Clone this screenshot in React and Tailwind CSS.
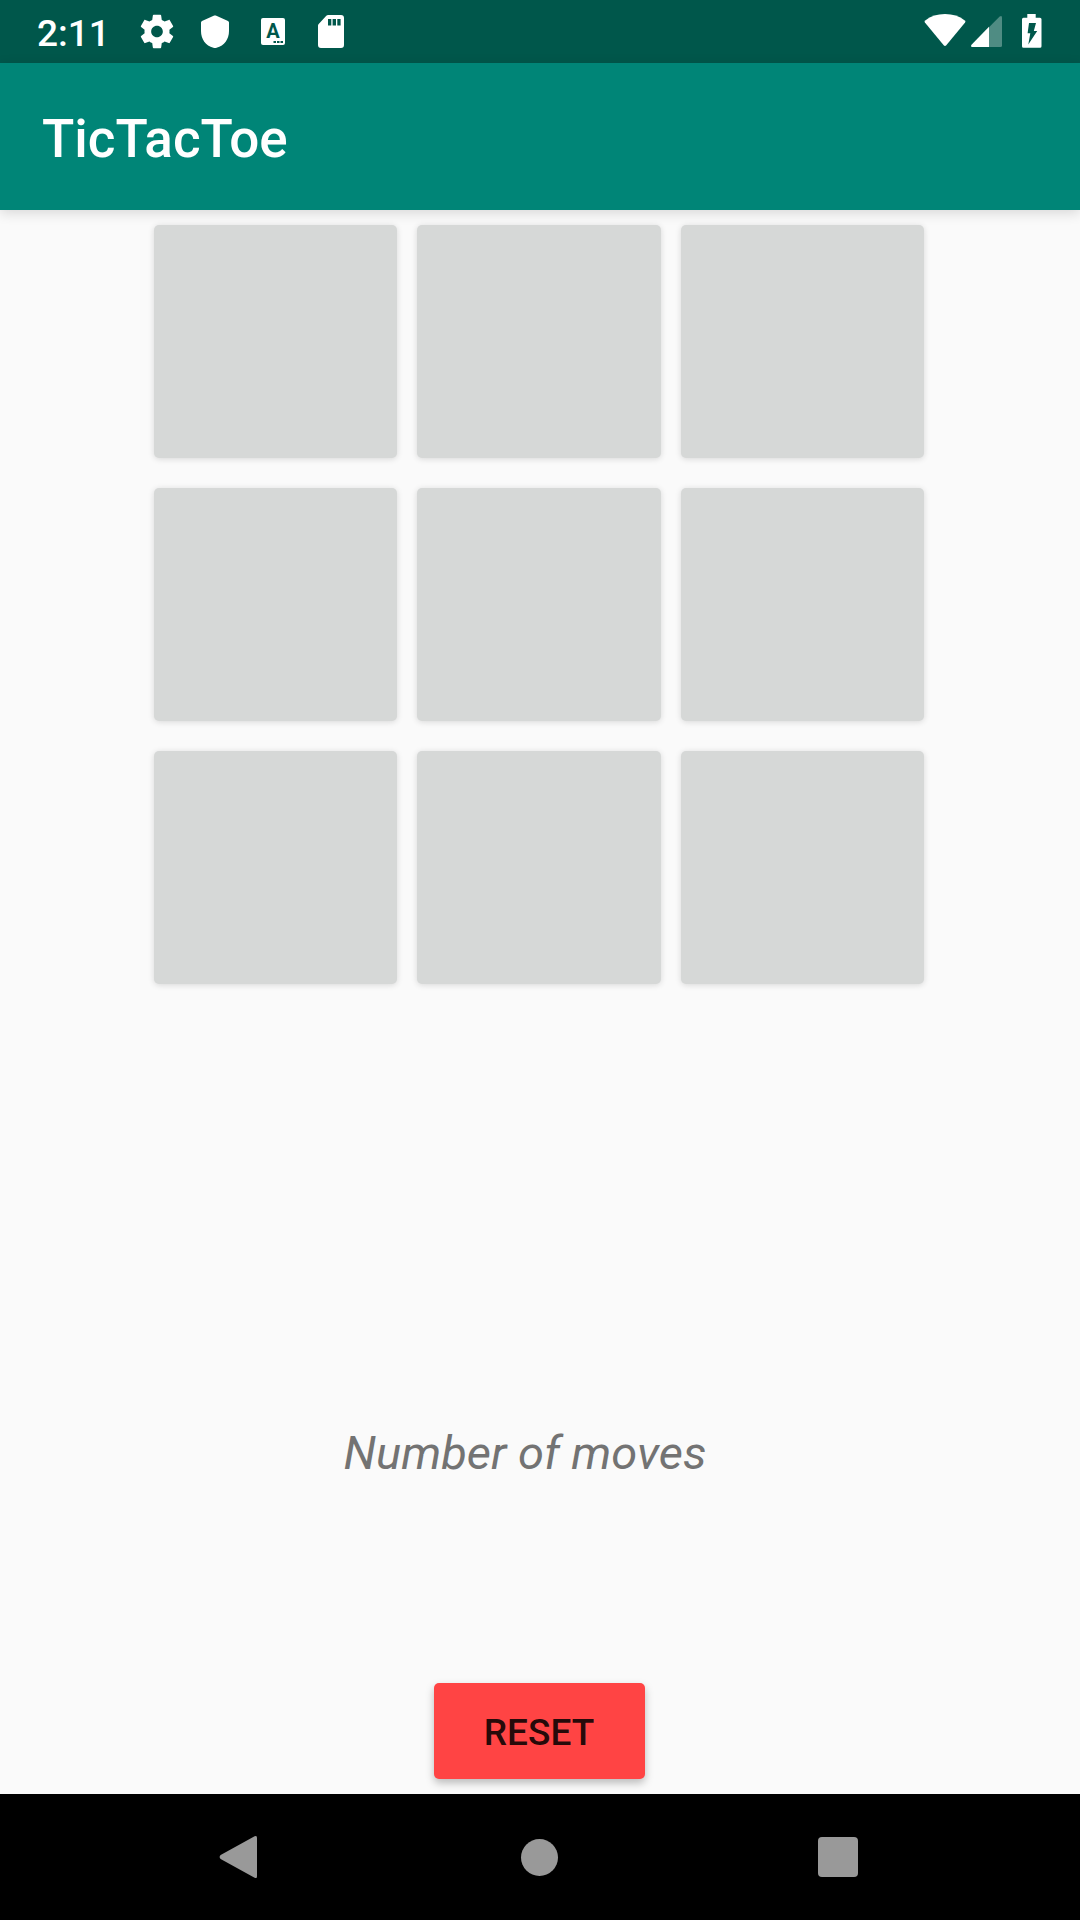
import React, { useState } from "react";

const icon = "h-[41px] w-10 shrink-0 fill-white";

function GearIcon() {
  return (
    <svg viewBox="0 0 24 24" className={icon} aria-hidden="true">
      <path d="M19.43 12.98c.04-.32.07-.64.07-.98s-.03-.66-.07-.98l2.11-1.65c.19-.15.24-.42.12-.64l-2-3.46c-.12-.22-.39-.3-.61-.22l-2.49 1c-.52-.4-1.08-.73-1.69-.98l-.38-2.65A.488.488 0 0 0 14 2h-4c-.25 0-.46.18-.49.42l-.38 2.65c-.61.25-1.17.59-1.69.98l-2.49-1c-.23-.09-.49 0-.61.22l-2 3.46c-.13.22-.07.49.12.64l2.11 1.65c-.04.32-.07.65-.07.98s.03.66.07.98l-2.11 1.65c-.19.15-.24.42-.12.64l2 3.46c.12.22.39.3.61.22l2.49-1c.52.4 1.08.73 1.69.98l.38 2.65c.03.24.24.42.49.42h4c.25 0 .46-.18.49-.42l.38-2.65c.61-.25 1.17-.59 1.69-.98l2.49 1c.23.09.49 0 .61-.22l2-3.46c.12-.22.07-.49-.12-.64l-2.11-1.65zM12 15.5c-1.93 0-3.5-1.57-3.5-3.5s1.57-3.5 3.5-3.5 3.5 1.57 3.5 3.5-1.57 3.5-3.5 3.5z" />
    </svg>
  );
}

function ShieldIcon() {
  return (
    <svg viewBox="0 0 40 41" className={icon} aria-hidden="true">
      <path d="M19.2 4.6q.8-.4 1.6 0L33 9.9q1 .5 1 1.6v8.5c0 8-4.6 14.8-12.4 16.7q-1.6.4-3.2 0C10.6 34.8 6 28 6 20v-8.5q0-1.1 1-1.6z" />
    </svg>
  );
}

function KeyboardIcon() {
  return (
    <svg viewBox="0 0 40 41" className={icon} aria-hidden="true">
      <rect x="8" y="7" width="24" height="27" rx="2" />
      <text x="20" y="27" textAnchor="middle" className="fill-[#00574b] font-['Roboto',sans-serif] text-[20px] font-bold">A</text>
      <path className="fill-[#00574b]" d="M20.500 30h2.500v2h-2.500zM24 30h2.500v2h-2.500zM27.500 30h2.500v2h-2.500z" />
    </svg>
  );
}

function SdCardIcon() {
  return (
    <svg viewBox="0 0 40 41" className={icon} aria-hidden="true">
      <path fillRule="evenodd" d="M17.2 4H30a3 3 0 0 1 3 3v27a3 3 0 0 1-3 3H10a3 3 0 0 1-3-3V14.6q0-1 .7-1.700L15.300 4.800Q16 4 17.200 4zM17 8v6.500h3.300V8zM21.600 8v6.500H25V8zM26.300 8v6.500h3.300V8z" />
    </svg>
  );
}

function WifiIcon() {
  return (
    <svg viewBox="0 0 42 41" className="h-[41px] w-[42px] fill-white" aria-hidden="true">
      <path d="M1.200 9.400Q9.500 3 21 3t19.800 6.400q1.200 1 .3 2.200L22.300 34.200q-1.300 1.500-2.600 0L.9 11.600Q0 10.400 1.200 9.400z" />
    </svg>
  );
}

function SignalIcon() {
  return (
    <svg viewBox="0 0 31 41" className="h-[41px] w-[31px] fill-white" aria-hidden="true">
      <path className="fill-[#4f8c83]" d="M18 16.300 28.400 5.700Q31 3.800 31 6.500V34.500Q31 36 29.500 36H18z" />
      <path d="M18 15.800V36H1.200Q-.8 36 .5 33.700z" />
    </svg>
  );
}

function BatteryIcon() {
  return (
    <svg viewBox="0 0 20 41" className="h-[41px] w-5 fill-white" aria-hidden="true">
      <path fillRule="evenodd" d="M5.300 3h8.400v3.800H18q1.500 0 1.500 1.500v27q0 1.500-1.500 1.500H1.500Q0 36.800 0 35.300v-27q0-1.500 1.500-1.500h3.800zM7 12 5.600 22.300h2.700L6.300 33.500 15.200 20h-3.400L14 12z" />
    </svg>
  );
}

export default function App() {
  const [cells, setCells] = useState(Array(9).fill(""));
  const moves = cells.filter(Boolean).length;

  const play = (index) => {
    if (cells[index]) return;
    setCells(cells.map((c, i) => (i === index ? (moves % 2 ? "O" : "X") : c)));
  };

  return (
    <div className="flex min-h-screen flex-col bg-[#fafafa] font-['Roboto',sans-serif]">
      <div className="flex h-[63px] items-center justify-between bg-[#00574b] pr-[38px] pl-[37px] text-white">
        <div className="flex items-center gap-[18px]">
          <span className="w-[82px] pt-1 text-[37px] leading-10 font-medium">2:11</span>
          <GearIcon />
          <ShieldIcon />
          <KeyboardIcon />
          <SdCardIcon />
        </div>
        <div className="flex items-center">
          <WifiIcon />
          <span className="w-[5px]" />
          <SignalIcon />
          <span className="w-5" />
          <BatteryIcon />
        </div>
      </div>

      <header className="relative z-10 flex h-[147px] items-center bg-[#008577] px-[42px] shadow-[0_3px_12px_rgba(0,0,0,0.14)]">
        <h1 className="pt-1 text-[53px] leading-[62px] font-medium text-white">TicTacToe</h1>
      </header>

      <main className="flex grow flex-col items-center pt-[15px] pr-[18px] pb-[15px] pl-4">
        <div className="grid w-full max-w-[770px] grid-cols-3 gap-x-5 gap-y-[30px]">
          {cells.map((cell, i) => (
            <button
              key={i}
              type="button"
              aria-label={`Cell ${i + 1}`}
              onClick={() => play(i)}
              className="h-[233px] rounded-[5px] bg-[#d6d8d7] text-[96px] text-black/85 shadow-[0_1px_6px_rgba(0,0,0,0.14)]"
            >
              {cell}
            </button>
          ))}
        </div>

        <p className="mt-auto pr-7 text-[47px] leading-14 text-[#737373] italic">Number of moves</p>

        <button
          type="button"
          onClick={() => setCells(Array(9).fill(""))}
          className="mt-[202px] h-24 w-[211px] rounded-[5px] bg-[#ff4444] pt-1 text-[37px] leading-11 font-medium text-black/87 shadow-[0_4px_9px_rgba(0,0,0,0.26)]"
        >
          RESET
        </button>
      </main>

      <nav className="flex h-[126px] items-center justify-center gap-[199px] bg-black pr-[2px]">
        <button type="button" aria-label="Back" className="flex h-[100px] w-[100px] items-center justify-center">
          <svg viewBox="0 0 42 44" className="h-11 w-[42px] fill-[#999999]" aria-hidden="true">
            <path d="M35.600 1.300Q38 0 38 2.800V41.200Q38 44 35.600 42.700L1.600 23.900Q-.4 22 1.600 20.100z" />
          </svg>
        </button>
        <button type="button" aria-label="Home" className="flex h-[100px] w-[100px] items-center justify-center">
          <span className="h-[37px] w-[37px] rounded-full bg-[#999999]" />
        </button>
        <button type="button" aria-label="Recent apps" className="flex h-[100px] w-[100px] items-center justify-center">
          <span className="h-10 w-10 rounded-[4px] bg-[#999999]" />
        </button>
      </nav>
    </div>
  );
}
